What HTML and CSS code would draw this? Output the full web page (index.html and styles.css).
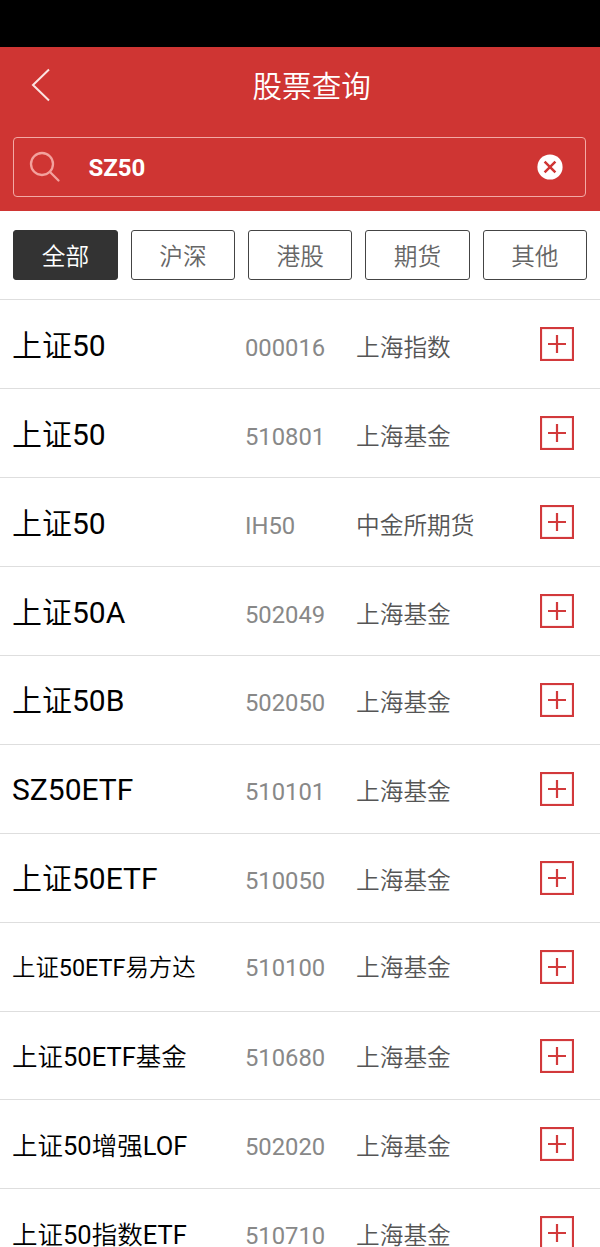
FILE: index.html
```html
<!DOCTYPE html>
<html lang="zh-CN">
<head>
<meta charset="UTF-8" />
<meta name="viewport" content="width=device-width, initial-scale=1" />
<title>股票查询</title>
<link rel="stylesheet" href="styles.css">
</head>
<body>

<div class="status-bar"></div>

<header>
  <div class="title-bar">
    <svg class="back" viewBox="0 0 20 34"><path d="M18 1.500 2 17l16 15.500"/></svg>
    <h1>股票查询</h1>
  </div>
  <div class="search">
    <svg class="search-icon" viewBox="0 0 32 32"><circle cx="13" cy="13" r="11"/><path d="M21 21l8.500 8.500"/></svg>
    <span class="keyword">SZ50</span>
    <svg class="clear" viewBox="0 0 26 26"><circle cx="13" cy="13" r="12.600"/><path d="M7.600 7.600l10.800 10.800M18.400 7.600L7.600 18.400"/></svg>
  </div>
</header>

<nav class="tabs">
  <button class="tab active">全部</button>
  <button class="tab">沪深</button>
  <button class="tab">港股</button>
  <button class="tab">期货</button>
  <button class="tab">其他</button>
</nav>

<ul class="stocks" id="stocks"></ul>

<script>
const stocks=[
  ['上证50','000016','上海指数'],
  ['上证50','510801','上海基金'],
  ['上证50','IH50','中金所期货'],
  ['上证50A','502049','上海基金'],
  ['上证50B','502050','上海基金'],
  ['SZ50ETF','510101','上海基金'],
  ['上证50ETF','510050','上海基金'],
  ['上证50ETF易方达','510100','上海基金','small'],
  ['上证50ETF基金','510680','上海基金','medium'],
  ['上证50增强LOF','502020','上海基金','medium'],
  ['上证50指数ETF','510710','上海基金','medium']
];

/* chinese runs are set lighter than latin ones */
const mark=text=>text.replace(/[\u4e00-\u9fff]+/g,'<span class="zh">$&</span>');

/* long names get a smaller size */
document.getElementById('stocks').innerHTML=stocks.map(([name,code,market,size=''])=>`
  <li>
    <span class="name ${size}">${mark(name)}</span>
    <span class="code">${code}</span>
    <span class="market">${market}</span>
    <svg class="add" viewBox="0 0 34 34"><rect x="1" y="1" width="32" height="32"/><path d="M8 17h18M17 8v18"/></svg>
  </li>`).join('');
</script>

</body>
</html>
```
FILE: styles.css
```css
*{box-sizing:border-box;}
body{
  margin:0;height:1247px;overflow:hidden;background:#fff;
  font-family:Roboto,'Noto Sans CJK SC',sans-serif;
}
.status-bar{height:47px;background:#000;}

/* header */
header{height:164.400px;background:#cf3533;color:#fff;padding:0 14px 0 13px;}
.title-bar{display:flex;height:90px;padding:21px 0 0 18px;}
.back{width:20px;height:34px;fill:none;stroke:#fbe4e2;stroke-width:2;}
h1{margin:2px 0 0 201.500px;font-size:29.600px;line-height:34px;font-weight:350;}
.search{
  display:flex;align-items:center;height:60px;padding:0 22.500px 0 15px;
  border:1.500px solid #f3a9a5;border-radius:4px;
}
.search-icon{width:32px;height:32px;fill:none;stroke:#f3a19d;stroke-width:2.300;stroke-linecap:round;}
.keyword{margin:1px 0 0 27.500px;font-size:24px;font-weight:700;line-height:30px;}
.clear{width:26px;height:26px;margin-left:auto;fill:#fff;}
.clear path{stroke:#cf3533;stroke-width:2.500;}

/* filter tabs */
.tabs{display:flex;gap:13px;height:88px;padding:19px 13px 0 13.400px;}
.tab{
  flex:1;height:50px;padding:3px 0 0;background:#fff;color:#666;
  border:1px solid #444;border-radius:3px;
  font-family:inherit;font-size:23.700px;font-weight:350;line-height:30px;
}
.tab.active{background:#333;border-color:#333;color:#fff;}

/* result list */
.stocks{list-style:none;margin:0;padding:0;}
.stocks li{
  display:flex;align-items:baseline;height:88.900px;padding:33.500px 26px 0 12px;
  border-top:1.500px solid #dedede;line-height:24px;
}
.name{width:233px;font-size:30px;color:#000;white-space:nowrap;}
.name.medium{font-size:25.500px;}
.name.small{font-size:23.400px;}
.zh{font-weight:350;}
.code{width:111px;font-size:23.800px;color:#888;}
.market{font-size:23.700px;font-weight:350;color:#555;}
.add{
  width:34px;height:34px;margin:-6.500px 0 0 auto;align-self:flex-start;
  fill:none;stroke:#d2393b;stroke-width:2.200;
}
```
